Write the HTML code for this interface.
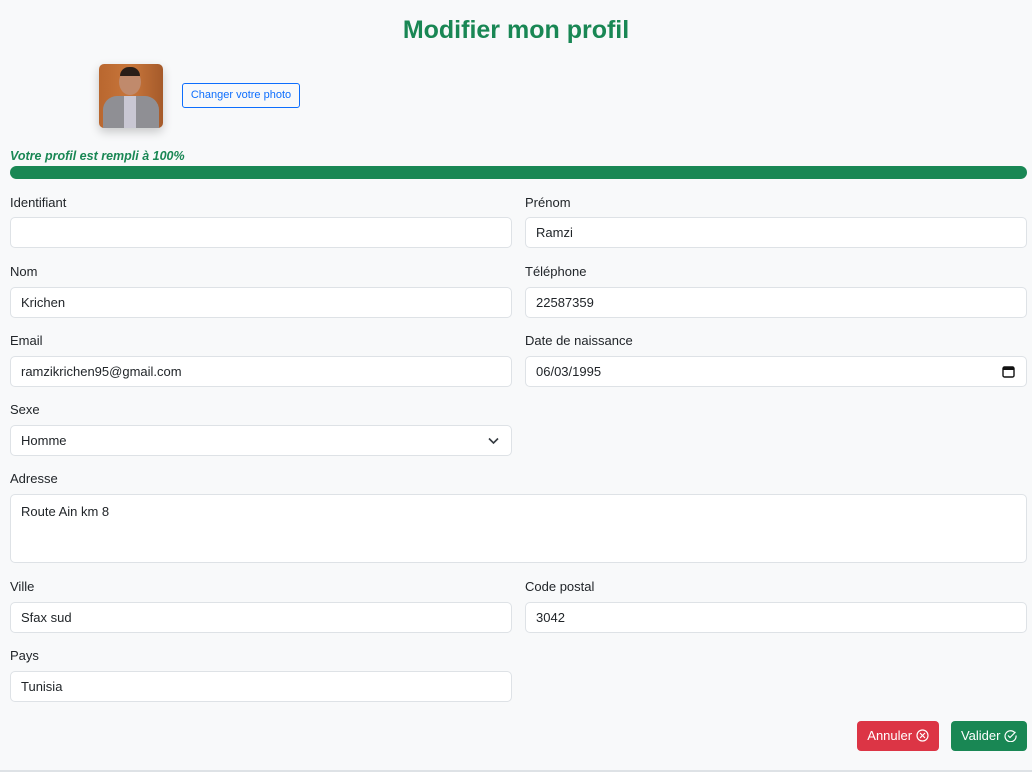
<!DOCTYPE html><html><head><style>
body{margin:0;width:1032px;height:772px;background:#f8f9fa;font-family:"Liberation Sans",sans-serif;position:relative;overflow:hidden;color:#212529}
.a{position:absolute}
h1{position:absolute;top:16px;left:0;width:1032px;text-align:center;margin:0;font-size:25px;color:#198754;font-weight:bold}
.l{position:absolute;font-size:13px;color:#212529}
.i{position:absolute;background:#fff;border:1px solid #dee2e6;border-radius:5px;box-sizing:border-box;height:31px;font-size:13px;padding:0 0 0 10px;line-height:29px}
.b{position:absolute;top:721px;height:30px;border-radius:4px;color:#fff;font-size:13px;line-height:30px;text-align:center}
</style></head><body>
<h1>Modifier mon profil</h1>
<div class="a" style="left:99px;top:64px;width:64px;height:64px;border-radius:5px;background:linear-gradient(90deg,#b9672f,#c8763b 50%,#a55a2a);box-shadow:0 4px 10px rgba(0,0,0,.2);overflow:hidden">
<div class="a" style="left:20px;top:5px;width:22px;height:26px;border-radius:50%;background:#c08a6c"></div>
<div class="a" style="left:21px;top:3px;width:20px;height:9px;border-radius:10px 10px 0 0;background:#2a1e18"></div>
<div class="a" style="left:4px;top:32px;width:56px;height:40px;border-radius:14px 14px 0 0;background:#8f8f94"></div>
<div class="a" style="left:25px;top:32px;width:12px;height:32px;background:#c9c7d3"></div></div>
<div class="a" style="left:182px;top:83px;width:116px;height:23px;border:1px solid #0d6efd;border-radius:3px;color:#0d6efd;font-size:11px;line-height:23px;text-align:center">Changer votre photo</div>
<div class="a" style="left:10px;top:149px;font-size:12.5px;font-weight:bold;font-style:italic;color:#198754">Votre profil est rempli à 100%</div>
<div class="a" style="left:10px;top:166px;width:1017px;height:13px;border-radius:7px;background:#198754"></div>
<div class="l" style="left:10px;top:195px">Identifiant</div><div class="i" style="left:10px;top:217px;width:502px"></div>
<div class="l" style="left:525px;top:195px">Prénom</div><div class="i" style="left:525px;top:217px;width:502px">Ramzi</div>
<div class="l" style="left:10px;top:264px">Nom</div><div class="i" style="left:10px;top:287px;width:502px">Krichen</div>
<div class="l" style="left:525px;top:264px">Téléphone</div><div class="i" style="left:525px;top:287px;width:502px">22587359</div>
<div class="l" style="left:10px;top:333px">Email</div><div class="i" style="left:10px;top:356px;width:502px">ramzikrichen95@gmail.com</div>
<div class="l" style="left:525px;top:333px">Date de naissance</div><div class="i" style="left:525px;top:356px;width:502px">06/03/1995<svg class="a" style="right:11px;top:8px" width="13" height="13" viewBox="0 0 13 13"><rect x="1" y="2" width="11" height="10" rx="1.5" fill="none" stroke="#111" stroke-width="1.4"/><rect x="1" y="2" width="11" height="3" fill="#111"/></svg></div>
<div class="l" style="left:10px;top:402px">Sexe</div><div class="i" style="left:10px;top:425px;width:502px">Homme<svg class="a" style="right:12px;top:11px" width="11" height="8" viewBox="0 0 11 8"><path d="M1 1.5l4.5 4.5L10 1.5" fill="none" stroke="#343a40" stroke-width="1.6"/></svg></div>
<div class="l" style="left:10px;top:471px">Adresse</div><div class="i" style="left:10px;top:494px;width:1017px;height:69px;line-height:normal;padding-top:9px">Route Ain km 8</div>
<div class="l" style="left:10px;top:579px">Ville</div><div class="i" style="left:10px;top:602px;width:502px">Sfax sud</div>
<div class="l" style="left:525px;top:579px">Code postal</div><div class="i" style="left:525px;top:602px;width:502px">3042</div>
<div class="l" style="left:10px;top:648px">Pays</div><div class="i" style="left:10px;top:671px;width:502px">Tunisia</div>
<div class="b" style="left:857px;width:82px;background:#dc3545">Annuler <svg width="13" height="13" viewBox="0 0 13 13" style="vertical-align:-2px"><circle cx="6.5" cy="6.5" r="5.5" fill="none" stroke="#fff" stroke-width="1.2"/><path d="M4 4l5 5M9 4l-5 5" stroke="#fff" stroke-width="1.2"/></svg></div>
<div class="b" style="left:951px;width:76px;background:#198754">Valider <svg width="13" height="13" viewBox="0 0 13 13" style="vertical-align:-2px"><path d="M11 4A5.5 5.5 0 1 0 12 6.5" fill="none" stroke="#fff" stroke-width="1.2"/><path d="M4 6.5l2 2 5.5-5.5" fill="none" stroke="#fff" stroke-width="1.2"/></svg></div>
<div class="a" style="left:0;top:770px;width:1032px;height:2px;background:#dee2e6"></div>
</body></html>
